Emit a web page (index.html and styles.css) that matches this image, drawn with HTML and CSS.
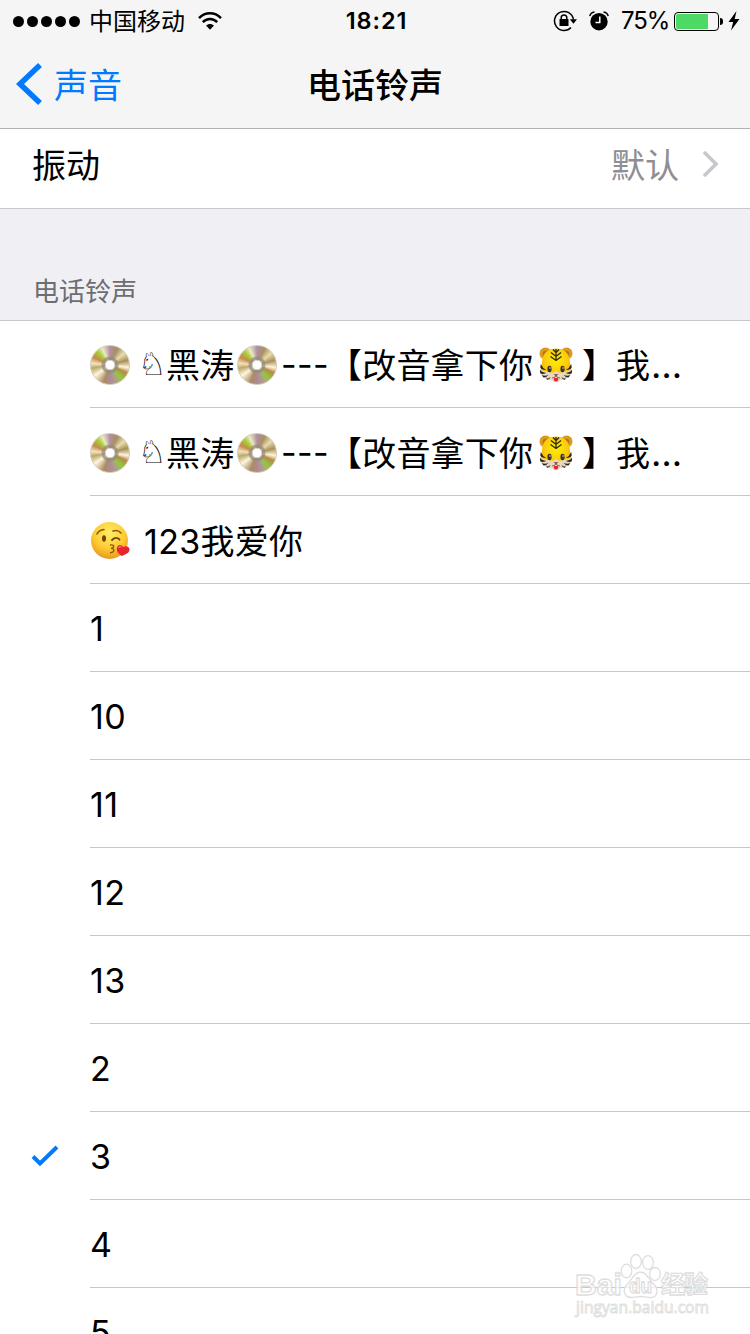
FILE: index.html
```html
<!DOCTYPE html>
<html lang="zh-CN">
<head>
    <meta charset="UTF-8">
    <meta name="viewport" content="width=device-width, initial-scale=1.0">
    <title>电话铃声</title>
    <link rel="stylesheet" href="styles.css">
</head>
<body>
    <!-- Shared drawings -->
    <svg class="defs" width="0" height="0">
        <defs>
            <radialGradient id="tigerFace" cx="50%" cy="35%" r="65%">
                <stop offset="0" stop-color="#ffee00"/>
                <stop offset="0.6" stop-color="#fbc90f"/>
                <stop offset="1" stop-color="#e79b16"/>
            </radialGradient>
            <radialGradient id="kissFace" cx="50%" cy="30%" r="70%">
                <stop offset="0" stop-color="#ffee62"/>
                <stop offset="0.6" stop-color="#fdcb36"/>
                <stop offset="1" stop-color="#e99a1c"/>
            </radialGradient>
            <symbol id="tiger" viewBox="0 0 36 38">
                <circle cx="7.500" cy="7.500" r="6" fill="#dc9a1c"/>
                <circle cx="28.500" cy="7.500" r="6" fill="#dc9a1c"/>
                <circle cx="8" cy="8" r="3.300" fill="#b5731b"/>
                <circle cx="28" cy="8" r="3.300" fill="#b5731b"/>
                <path d="M18 2.500C9 2.500 4 8 4 17c-1 4-2 7-1 10 2 4 7 6 11 7 2 2 6 2 8 0 4-1 9-3 11-7 1-3 0-6-1-10C32 8 27 2.500 18 2.500z" fill="url(#tigerFace)"/>
                <path d="M2.500 24c4 1 8 2 12 3l3.500-2 3.500 2c4-1 8-2 12-3 0 5-5 8-11 10-2 3-7 3-9 0C7 32 2.500 29 2.500 24z" fill="#e6d9c0"/>
                <path d="M18 3v12M15 3.500l3 3 3-3M13 6.500l5 4 5-4M12.500 10.500l5.500 4 5.500-4" fill="none" stroke="#302a10" stroke-width="1.300"/>
                <path d="M2.800 18q1.500 4 5.500 6q-5-.5-6-2.500zM1.800 24q3 3 6.500 3q-4 1.500-6 .5zM3.500 29q3 1.500 7 0q-3 3-5 2.500zM7.500 32.500q3 .5 5-1.500q-1 3-3 2.800z" fill="#282624"/>
                <path d="M33.200 18q-1.500 4-5.500 6q5-.5 6-2.500zM34.200 24q-3 3-6.500 3q4 1.500 6 .5zM32.500 29q-3 1.500-7 0q3 3 5 2.500zM28.500 32.500q-3 .5-5-1.500q1 3 3 2.800z" fill="#282624"/>
                <ellipse cx="11.500" cy="23" rx="2.100" ry="3.200" fill="#3b3320"/>
                <ellipse cx="24.500" cy="23" rx="2.100" ry="3.200" fill="#3b3320"/>
                <circle cx="12" cy="22" r=".7" fill="#fff"/>
                <circle cx="25" cy="22" r=".7" fill="#fff"/>
                <path d="M15.500 28h5l-2.500 2.500z" fill="#8b5b50"/>
                <path d="M14 32q4-.5 4-2.500q0 2 4 2.500" fill="none" stroke="#665547" stroke-width=".8"/>
                <path d="M15.800 32h4.500q0 3.500-2.300 3.500t-2.200-3.500z" fill="#e5203b"/>
            </symbol>
        </defs>
    </svg>

    <div class="navbar">
        <div class="status">
            <div class="status-left">
                <div class="signal"><i></i><i></i><i></i><i></i><i></i></div>
                <span class="carrier">中国移动</span>
                <svg class="wifi" width="24" height="18" viewBox="0 0 24 18">
                    <path d="M1 6.200C7.200-.3 16.800-.3 23 6.200" fill="none" stroke="#000" stroke-width="2.500"/>
                    <path d="M4.800 10.100c4-4.200 10.400-4.200 14.400 0" fill="none" stroke="#000" stroke-width="2.500"/>
                    <path d="M12 17.800l-4-4.200c2.200-2.300 5.800-2.300 8 0z"/>
                </svg>
            </div>
            <span class="time">18:21</span>
            <div class="status-right">
                <svg class="lock" width="24" height="22" viewBox="0 0 24 22">
                    <path d="M20.400 9.500A9.500 9.500 0 1 0 18 17.400" fill="none" stroke="#000" stroke-width="1.500"/>
                    <path d="M16.800 9.300h7.200l-3.600 4.500z"/>
                    <rect x="6.500" y="9" width="9" height="7" rx=".6"/>
                    <path d="M8.200 9.500V7.700a2.800 2.800 0 0 1 5.600 0v1.800" fill="none" stroke="#000" stroke-width="1.500"/>
                </svg>
                <svg class="alarm" width="20" height="20" viewBox="0 0 20 20">
                    <circle cx="10" cy="10.700" r="8.700"/>
                    <path d="M.8 5.200Q1.500 1.500 5.500 1M19.200 5.200Q18.500 1.500 14.500 1" fill="none" stroke="#000" stroke-width="1.500"/>
                    <path d="M10.800 5.500v6H6.500" fill="none" stroke="#fff" stroke-width="1.500"/>
                </svg>
                <span class="percent">75%</span>
                <div class="battery"><div class="battery-level"></div></div>
                <div class="battery-cap"></div>
                <svg class="bolt" width="12" height="20" viewBox="0 0 12 20">
                    <path d="M8.500 0L.5 11h4.700L3 19.500 11.500 8H6.700z"/>
                </svg>
            </div>
        </div>
        <div class="nav">
            <a class="back">
                <svg width="27" height="42" viewBox="0 0 27 42">
                    <path d="M24 2L4 21l20 19" fill="none" stroke="#007aff" stroke-width="5.500"/>
                </svg>
                <span>声音</span>
            </a>
            <h1>电话铃声</h1>
        </div>
    </div>

    <div class="cell">
        <span>振动</span>
        <span class="value">默认</span>
        <svg class="chevron" width="17" height="28" viewBox="0 0 17 28">
            <path d="M2 2l12 12L2 26" fill="none" stroke="#c7c7cc" stroke-width="3.600"/>
        </svg>
    </div>

    <div class="section-title">电话铃声</div>

    <ul class="list">
        <li>
            <i class="disc"></i><span class="knight">♘</span><span class="name">黑涛</span><i class="disc"></i><span class="dashes">---</span><span class="song">【改音拿下你</span><svg class="tiger"><use href="#tiger"/></svg><span class="rest">】我</span><span class="dots">…</span>
        </li>
        <li>
            <i class="disc"></i><span class="knight">♘</span><span class="name">黑涛</span><i class="disc"></i><span class="dashes">---</span><span class="song">【改音拿下你</span><svg class="tiger"><use href="#tiger"/></svg><span class="rest">】我</span><span class="dots">…</span>
        </li>
        <li>
            <svg class="kiss" width="40" height="40" viewBox="0 0 40 40">
                <circle cx="19.500" cy="19.500" r="18.500" fill="url(#kissFace)"/>
                <path d="M7 13q2-4 7-4.500M23 10q5-1.500 8 2" fill="none" stroke="#90550d" stroke-width="1.600" stroke-linecap="round"/>
                <ellipse cx="14" cy="17.500" rx="2" ry="3.200" fill="#74430b"/>
                <path d="M22 19q4-4 7.500-.5" fill="none" stroke="#74430b" stroke-width="1.800" stroke-linecap="round"/>
                <path d="M20 24q5-.5 3.500 2.200q-.8 1-2.500 1.200q4 .5 2.500 3q-1 1.300-3.500 1.300" fill="none" stroke="#95540d" stroke-width="1.400"/>
                <path d="M31.500 35c-3-3-5.500-4.500-4.500-8.500 1-3.200 4.800-3.300 6.300-.3 2.700-2 6.200-.6 6.200 2.300 0 3.500-4 5-8 6.500z" fill="#e9232f"/>
                <path d="M28.500 27q1-2 3-1" fill="none" stroke="#ff7770" stroke-width="1.200"/>
            </svg><span class="love">123我爱你</span>
        </li>
        <li>1</li>
        <li>10</li>
        <li>11</li>
        <li>12</li>
        <li>13</li>
        <li>2</li>
        <li class="checked">
            <svg class="check" width="28" height="22" viewBox="0 0 28 22">
                <path d="M2 11.500l7 7L26 2" fill="none" stroke="#007aff" stroke-width="4"/>
            </svg>3
        </li>
        <li>4</li>
        <li>5</li>
    </ul>

    <svg class="watermark" width="150" height="70" viewBox="0 0 150 70">
        <g fill="#fff" fill-opacity=".7" stroke="#dedede" stroke-width="1.300">
            <ellipse cx="55.500" cy="19" rx="5.300" ry="6.800"/>
            <ellipse cx="65" cy="9.500" rx="5.300" ry="7"/>
            <ellipse cx="77" cy="10.500" rx="5.300" ry="6.800"/>
            <ellipse cx="84" cy="22" rx="5.300" ry="6.500"/>
            <path d="M69.500 20c-6 0-8 7-13 12-6 6-3 13.500 4 13.500 4 0 6-1 9-1s6 1 10 1c7 0 9-8 3-13.500-5-5-7-12-13-12z"/>
            <text class="logo" x="4" y="43" font-size="30" textLength="47" lengthAdjust="spacingAndGlyphs">Bai</text>
            <text class="logo" x="58" y="41" font-size="20" textLength="23" lengthAdjust="spacingAndGlyphs">du</text>
            <text x="90" y="41" font-size="24" font-weight="700" textLength="47">经验</text>
            <text class="site" x="5" y="61" font-size="16" textLength="133" lengthAdjust="spacingAndGlyphs">jingyan.baidu.com</text>
        </g>
    </svg>
</body>
</html>
```
FILE: styles.css
```css
* {
    box-sizing: border-box;
}
body {
    margin: 0;
    height: 1334px;
    overflow: hidden;
    position: relative;
    background: #fff;
    color: #000;
    font-family: Inter, "Noto Sans CJK SC", sans-serif;
    font-size: 34px;
}
svg {
    display: block;
    flex: none;
}
.defs {
    position: absolute;
}

/* Navigation bar */
.navbar {
    height: 129px;
    background: #f5f5f6;
    border-bottom: 1px solid #b2b2b2;
}
.status {
    height: 40px;
    display: grid;
    grid-template-columns: 1fr auto 1fr;
    align-items: center;
    padding: 0 10px 0 13px;
    font-size: 24px;
    line-height: 40px;
}
.status-left,
.status-right {
    display: flex;
    align-items: center;
}
.status-right {
    justify-content: flex-end;
}
.signal {
    display: flex;
    gap: 3px;
}
.signal i {
    width: 11px;
    height: 11px;
    border-radius: 50%;
    background: #000;
}
.carrier {
    margin-left: 9px;
    padding-top: 2px;
}
.wifi {
    margin-left: 13px;
}
.time {
    font-weight: 600;
    font-size: 23.500px;
    letter-spacing: 0.900px;
}
.alarm {
    margin-left: 12px;
}
.percent {
    margin-left: 12px;
    width: 53px;
    letter-spacing: -1.100px;
}
.battery {
    width: 45px;
    height: 19px;
    padding: 1px;
    border: 1px solid #000;
    border-radius: 4px;
}
.battery-level {
    width: 32px;
    height: 15px;
    border-radius: 2px 0 0 2px;
    background: #4cd964;
}
.battery-cap {
    width: 3px;
    height: 7px;
    margin-left: 1px;
    border-radius: 0 3px 3px 0;
    background: #000;
}
.bolt {
    margin-left: 5px;
}
.nav {
    height: 88px;
    display: grid;
    grid-template-columns: 1fr auto 1fr;
    align-items: center;
    padding: 0 16px;
}
.back {
    display: flex;
    align-items: center;
    gap: 11px;
    color: #007aff;
}
.back span {
    padding-bottom: 2px;
}
h1 {
    margin: 0;
    padding-bottom: 2px;
    font-size: 34px;
    font-weight: 500;
}

/* Vibration cell */
.cell {
    height: 80px;
    display: flex;
    align-items: center;
    padding: 0 31px 9px 32px;
    border-bottom: 1px solid #c8c7cc;
}
.cell span {
    padding-bottom: 2px;
}
.value {
    margin-left: auto;
    color: #8e8e93;
}
.chevron {
    margin-left: 23px;
}
.section-title {
    height: 112px;
    padding: 64px 0 0 33px;
    background: #efeff4;
    border-bottom: 1px solid #c8c7cc;
    color: #6d6d72;
    font-size: 26px;
    line-height: 38px;
}

/* Ringtones */
.list {
    margin: -1px 0 0 90px;
    padding: 0;
    list-style: none;
}
.list li {
    height: 88px;
    display: flex;
    align-items: center;
    padding-top: 2px;
    border-bottom: 1px solid #c8c7cc;
    letter-spacing: 0.300px;
    white-space: nowrap;
}
.disc {
    flex: none;
    width: 40px;
    height: 40px;
    border: 1px solid #d5ccb5;
    border-radius: 50%;
    background:
        radial-gradient(circle, #fff 0 4px, #d8d2c4 4.500px 5px, rgba(150, 140, 125, 0.75) 5.500px 8px, transparent 9px),
        conic-gradient(#b08fa0, #a89060 25deg, #e8dcae 50deg, #a8915a 75deg, #fff5d8 98deg, #b8884c 115deg, #8fc838 138deg, #a8b070 150deg, #b18a9c 175deg, #a88b62 200deg, #fff6dd 235deg, #bba86c 260deg, #f0e5bd 275deg, #c8884c 295deg, #a7d137 318deg, #eee8c5 335deg, #b08fa0);
}
.knight {
    width: 36px;
    padding: 0 0 1px 8px;
    font-family: "DejaVu Sans", sans-serif;
    font-size: 32px;
}
.name {
    width: 71px;
    padding-bottom: 2px;
}
.dashes {
    width: 52px;
    padding-left: 4px;
}
.song {
    width: 210px;
    margin-left: -1px;
    letter-spacing: 0.200px;
}
.song,
.rest {
    padding-bottom: 2px;
    font-family: "Noto Sans CJK SC", sans-serif;
}
.tiger {
    width: 36px;
    height: 38px;
}
.rest {
    margin-left: 8px;
    letter-spacing: 0;
}
.dots {
    margin-left: 1px;
    font-size: 36px;
}
.love {
    margin-left: 14px;
    padding-bottom: 3px;
}
.checked {
    position: relative;
}
.check {
    position: absolute;
    left: -59px;
    top: 33px;
}

/* Logo over the list */
.watermark {
    position: absolute;
    left: 571px;
    top: 1252px;
    font-family: "Noto Sans CJK SC", sans-serif;
}
.logo {
    font-family: "Liberation Sans", Arial, sans-serif;
    font-weight: 700;
}
.site {
    font-family: "Open Sans", sans-serif;
    font-weight: 400;
    stroke-width: 0.900px;
}
```
